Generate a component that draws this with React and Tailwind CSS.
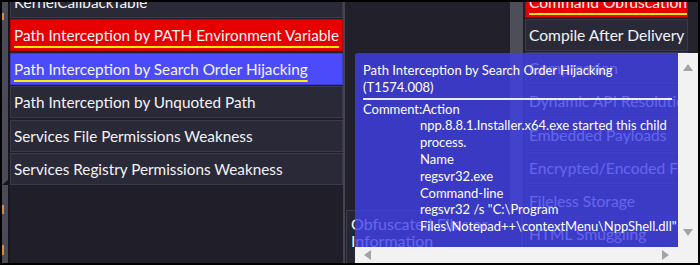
import { memo } from "react";

const leftRows = [
  { label: "KernelCallbackTable" },
  { label: "Path Interception by PATH Environment Variable", tone: "red" },
  { label: "Path Interception by Search Order Hijacking", tone: "blue" },
  { label: "Path Interception by Unquoted Path" },
  { label: "Services File Permissions Weakness" },
  { label: "Services Registry Permissions Weakness" },
];

const rightRows = [
  { label: "Command Obfuscation", tone: "red" },
  { label: "Compile After Delivery" },
  { label: "Compression" },
  { label: "Dynamic API Resolution" },
  { label: "Embedded Payloads" },
  { label: "Encrypted/Encoded File" },
  { label: "Fileless Storage" },
  { label: "HTML Smuggling" },
  { label: "Indicator Removal from Tools" },
];

const commentLines = [
  "npp.8.8.1.Installer.x64.exe started this child",
  "process.",
  "Name",
  "regsvr32.exe",
  "Command-line",
  'regsvr32 /s "C:\\Program',
  'Files\\Notepad++\\contextMenu\\NppShell.dll"',
];

const rowTone = {
  red: "bg-[#e60000] border-[#c00000]",
  blue: "bg-[#4b4bfb] border-[#3c3ccc]",
  none: "bg-[#2a2937] border-[#3b3a4a]",
};

function Row({ label, tone }) {
  const marked = tone === "red" || tone === "blue";
  return (
    <div
      className={`h-[32px] shrink-0 border px-[3px] pt-[1px] flex items-center whitespace-nowrap overflow-hidden ${rowTone[tone || "none"]}`}
    >
      <span
        className={
          marked
            ? "underline decoration-[#ffec00] decoration-2 underline-offset-[5px]"
            : ""
        }
      >
        {label}
      </span>
    </div>
  );
}

const App = memo(function App() {
  return (
    <div
      className="w-[700px] h-[267px] bg-white overflow-hidden"
      style={{ fontFamily: '"Segoe UI", Lato, "Noto Sans", sans-serif' }}
    >
      <div className="relative h-[265px] border-2 border-black bg-[#1f1e29] flex overflow-hidden text-[15.3px] text-[#f4f4f8]">
        {/* Left gutter strip */}
        <div className="relative w-[6px] shrink-0 bg-[#4a4b56]">
          <div className="absolute left-0 top-[11px] w-[2px] h-[7px] bg-[#d98c2e]" />
          <div className="absolute left-0 top-[203px] w-[2px] h-[9px] bg-[#d98c2e]" />
          <div className="absolute left-0 top-[243px] w-[2px] h-[10px] bg-[#d98c2e]" />
          <div className="absolute left-0 top-[178px] w-0 h-0 border-l-[6px] border-l-transparent border-b-[5px] border-b-[#16151d]" />
        </div>
        <div className="w-[2px] shrink-0 bg-[#17161f]" />

        {/* Left technique list */}
        <div className="w-[333px] shrink-0 flex flex-col gap-[1.4px] mt-[-16px]">
          {leftRows.map((r) => (
            <Row key={r.label} {...r} />
          ))}
        </div>
        <div className="w-[2px] shrink-0 bg-[#44434f]" />

        {/* Middle gap */}
        <div className="w-[165px] shrink-0 bg-[#21202b]" />
        <div className="w-[13px] shrink-0 bg-[#4d4e58]" />

        {/* Right technique list */}
        <div className="w-[165px] shrink-0 pl-[2px] flex flex-col gap-[1.2px] mt-[-16px] overflow-hidden text-[15.6px]">
          {rightRows.map((r) => (
            <Row key={r.label} {...r} />
          ))}
        </div>
        <div className="flex-1 bg-[#24232e]" />

        {/* Earlier popup under the tooltip */}
        <div className="absolute left-[344px] top-[208px] w-[176px] h-[60px] border border-[#3d3c48] bg-[#262531] px-[4px] pt-[4px] leading-[17px] text-[16px]">
          <div>Obfuscated Files or</div>
          <div>Information</div>
        </div>

        {/* Hover tooltip */}
        <div className="absolute left-[353px] top-[51px] right-0 bottom-0 flex flex-col">
          <div className="flex-1 flex min-h-0">
            <div className="flex-1 rounded-tl-[3px] bg-[#4040ea]/80 pl-[8px] pr-[6px] pt-[9px] text-[13px] leading-[16.8px] text-white overflow-hidden">
              <div>Path Interception by Search Order Hijacking</div>
              <div>(T1574.008)</div>
              <div className="h-[2px] bg-white/90 mt-[2px] mb-[1px]" />
              <div>Comment:Action</div>
              <div className="pl-[57px]">
                {commentLines.map((l) => (
                  <div key={l} className="whitespace-nowrap">
                    {l}
                  </div>
                ))}
              </div>
            </div>
            <div className="w-[20px] shrink-0 bg-[#f2f2f2] flex flex-col items-center justify-between py-[11px]">
              <div className="w-0 h-0 border-x-[5px] border-x-transparent border-b-[7px] border-b-[#a3a3a3]" />
              <div className="w-0 h-0 border-x-[5px] border-x-transparent border-t-[7px] border-t-[#a3a3a3]" />
            </div>
          </div>
          <div className="h-[16px] shrink-0 bg-[#f2f2f2] flex items-center pl-[9px] pr-[29px] justify-between">
            <div className="w-0 h-0 border-y-[5px] border-y-transparent border-r-[7px] border-r-[#a3a3a3]" />
            <div className="w-0 h-0 border-y-[5px] border-y-transparent border-l-[7px] border-l-[#a3a3a3]" />
          </div>
        </div>
      </div>
    </div>
  );
});

export default App;
